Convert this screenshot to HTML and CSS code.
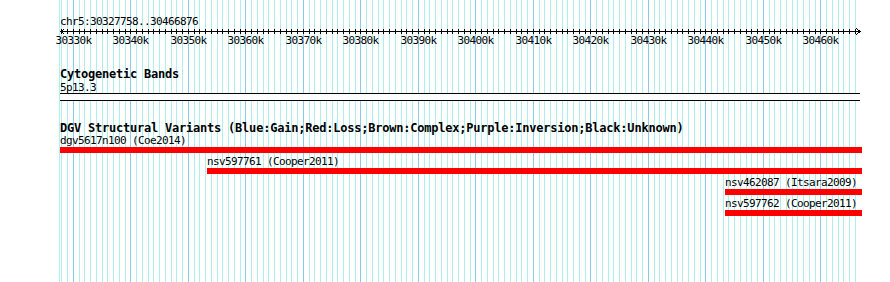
FILE: index.html
```html
<!DOCTYPE html>
<html lang="en">
<head>
    <meta charset="UTF-8">
    <title>chr5:30327758..30466876</title>
    <link rel="stylesheet" href="styles.css">
</head>
<body>

    <div class="panel">
        <svg class="grid" id="grid" width="890" height="282"></svg>

        <div class="tracks">
            <div class="segment">chr5:30327758..30466876</div>
            <svg class="ruler" id="ruler" width="800" height="20"></svg>

            <div class="track-title cyto-title">Cytogenetic Bands</div>
            <div class="label band-name">5p13.3</div>
            <div class="band"></div>

            <div class="track-title dgv-title">DGV Structural Variants (Blue:Gain;Red:Loss;Brown:Complex;Purple:Inversion;Black:Unknown)</div>

            <div class="feature" style="margin-left:0px;width:802px">
                <div class="label">dgv5617n100 (Coe2014)</div>
                <div class="bar"></div>
            </div>
            <div class="feature" style="margin-left:147px;width:655px">
                <div class="label">nsv597761 (Cooper2011)</div>
                <div class="bar"></div>
            </div>
            <div class="feature" style="margin-left:665px;width:137px">
                <div class="label">nsv462087 (Itsara2009)</div>
                <div class="bar"></div>
            </div>
            <div class="feature" style="margin-left:665px;width:137px">
                <div class="label">nsv597762 (Cooper2011)</div>
                <div class="bar"></div>
            </div>
        </div>
    </div>

<script>
    const NS = "http://www.w3.org/2000/svg";
    const start = 30327758, end = 30466876;
    const left = 60, width = 800;
    const scale = width / (end - start + 1);
    const xOf = pos => Math.round(left + (pos - start) * scale);

    function el(name, attrs) {
        const node = document.createElementNS(NS, name);
        for (const key in attrs) node.setAttribute(key, attrs[key]);
        return node;
    }

    // background grid, one line per kb
    const grid = document.getElementById("grid");
    grid.appendChild(el("rect", { x: 59, y: 0, width: 1, height: 282, class: "minor" }));
    for (let kb = 30328; kb <= 30466; kb++) {
        const major = kb % 10 === 0;
        grid.appendChild(el("rect", {
            x: xOf(kb * 1000), y: 0, width: 1, height: 282,
            class: major ? "major" : "minor"
        }));
    }

    // ruler
    const ruler = document.getElementById("ruler");
    ruler.appendChild(el("rect", { x: 0, y: 3, width: 801, height: 1, class: "ink" }));
    ruler.appendChild(el("path", { d: "M4.5 0.5 L1 3.5 L4.5 6.5", class: "arrow" }));
    ruler.appendChild(el("path", { d: "M796.5 0.5 L800 3.5 L796.5 6.5", class: "arrow" }));
    for (let kb = 30328; kb <= 30466; kb++) {
        const x = xOf(kb * 1000) - left;
        ruler.appendChild(el("rect", { x: x, y: 1, width: 1, height: 5, class: "ink" }));
        if (kb % 10 === 0) {
            const t = el("text", { x: x + 0.5, y: 16, class: "tick-label" });
            t.textContent = kb + "k";
            ruler.appendChild(t);
        }
    }
</script>

</body>
</html>
```

FILE: styles.css
```css
/* Page */
body {
    margin: 0;
    background-color: #ffffff;
    color: #000000;
}

.panel {
    position: relative;
    width: 890px;
    height: 282px;
    overflow: hidden;
    background-color: #ffffff;
}

.grid {
    position: absolute;
    top: 0;
    left: 0;
    shape-rendering: crispEdges;
}

.grid .minor {
    fill: #afeeee;
}

.grid .major {
    fill: #87cdea;
}

.tracks {
    position: relative;
    padding: 16px 0 0 60px;
}

/* Text */
.segment, .label {
    font-family: "DejaVu Sans Mono", monospace;
    font-size: 11px;
    letter-spacing: -0.62px;
    line-height: 12px;
    white-space: nowrap;
}

.track-title {
    font-family: "DejaVu Sans Mono", monospace;
    font-weight: bold;
    font-size: 12px;
    letter-spacing: -0.22px;
    line-height: 12px;
    white-space: nowrap;
}

.cyto-title {
    margin-top: 19px;
    line-height: 14px;
}

.band-name {
    line-height: 13px;
}

.dgv-title {
    margin-top: 21px;
}

/* Ruler */
.ruler {
    display: block;
    overflow: visible;
    shape-rendering: crispEdges;
}

.ruler .ink {
    fill: #000000;
}

.ruler .arrow {
    fill: none;
    stroke: #000000;
    stroke-width: 1;
}

.ruler .tick-label {
    font-family: "DejaVu Sans Mono", monospace;
    font-size: 11px;
    letter-spacing: -0.62px;
    text-anchor: middle;
    fill: #000000;
}

/* Cytoband */
.band {
    width: 800px;
    height: 6px;
    margin-top: -1px;
    background-color: #ffffff;
    border-top: 1px solid #000000;
    border-bottom: 1px solid #000000;
}

/* Features */
.feature {
    margin-top: 3px;
}

.dgv-title + .feature {
    margin-top: 1px;
}

.bar {
    height: 6px;
    background-color: #ff0000;
}
```
